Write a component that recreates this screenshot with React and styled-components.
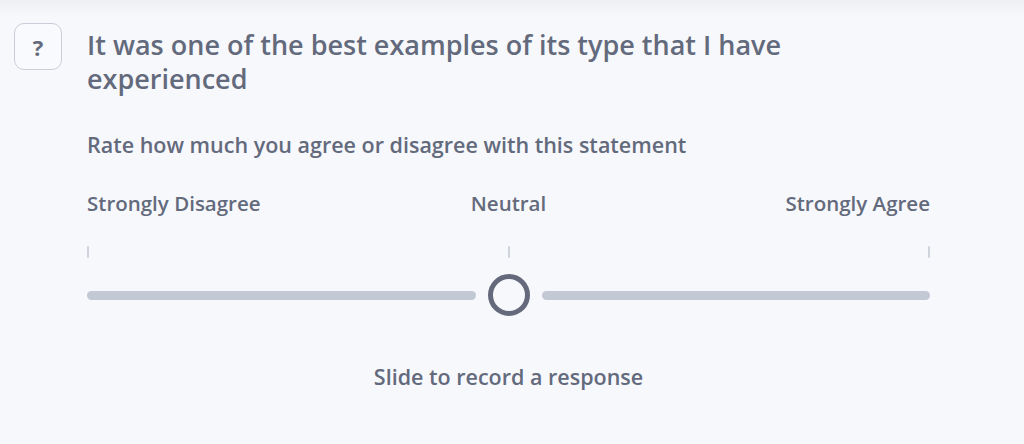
import React, { useState } from 'react';
import styled, { createGlobalStyle } from 'styled-components';

const GlobalStyle = createGlobalStyle`
    html, body {
        margin:0;
        padding:0;
        background:#f7f8fc;
    }
    body {
        font-family: "Open Sans", "Noto Sans", sans-serif;
    }
`

const Page = styled.div`
    width:1024px;
    height:444px;
    box-sizing:border-box;
    background: linear-gradient(to bottom, #eeeff3 0px, #f7f8fc 16px);
    padding:23px 94px 0 14px;
    color:#636a7c;
`

const QuestionRow = styled.div`
    display:flex;
    align-items:flex-start;
    gap:25px;
`

const HelpBox = styled.div`
    flex:none;
    width:46px;
    height:45px;
    border:1px solid #c9cdd8;
    border-radius:10px;
    background:#f9fafd;
    display:flex;
    align-items:center;
    justify-content:center;
    font-size:22px;
    font-weight:700;
    color:#636a7c;
`

const Question = styled.h1`
    margin:5px 0 0;
    max-width:760px;
    font-size:27px;
    line-height:34px;
    font-weight:600;
    color:#636a7c;
`

const Body = styled.div`
    margin-left:73px;
    display:flex;
    flex-direction:column;
`

const Prompt = styled.p`
    margin:35px 0 0;
    font-size:21.5px;
    line-height:28px;
    font-weight:600;
`

const Labels = styled.div`
    margin-top:30px;
    display:grid;
    grid-template-columns:1fr auto 1fr;
    font-size:20.5px;
    line-height:28px;
    font-weight:600;
`

const Label = styled.span`
    justify-self:${p => p.align};
`

const Ticks = styled.div`
    margin-top:29px;
    height:12px;
    display:flex;
    justify-content:space-between;
`

const Tick = styled.span`
    width:2px;
    height:12px;
    border-radius:1px;
    background:#cfd3dc;
`

const Track = styled.div`
    margin-top:16px;
    height:42px;
    display:grid;
    grid-template-columns:1fr 42px 1fr;
    align-items:center;
    column-gap:12px;
`

const Rail = styled.div`
    height:9px;
    border-radius:5px;
    background:#c3c8d5;
`

const Thumb = styled.button`
    width:42px;
    height:42px;
    box-sizing:border-box;
    padding:0;
    border:5px solid #646a7c;
    border-radius:50%;
    background:#f7f8fc;
    cursor:pointer;
`

const Hint = styled.p`
    margin:47px 0 0;
    text-align:center;
    font-size:21.5px;
    line-height:28px;
    font-weight:600;
`

const App = () => {
    let [touched, setTouched] = useState(false)

    return(
        <Page>
            <GlobalStyle/>
            <QuestionRow>
                <HelpBox>?</HelpBox>
                <Question>It was one of the best examples of its type that I have experienced</Question>
            </QuestionRow>
            <Body>
                <Prompt>Rate how much you agree or disagree with this statement</Prompt>
                <Labels>
                    <Label align="start">Strongly Disagree</Label>
                    <Label align="center">Neutral</Label>
                    <Label align="end">Strongly Agree</Label>
                </Labels>
                <Ticks>
                    <Tick/>
                    <Tick/>
                    <Tick/>
                </Ticks>
                <Track>
                    <Rail/>
                    <Thumb aria-label="slider" onClick={() => setTouched(true)}/>
                    <Rail/>
                </Track>
                <Hint>{touched ? 'Response recorded' : 'Slide to record a response'}</Hint>
            </Body>
        </Page>
    )
}

export default App;
